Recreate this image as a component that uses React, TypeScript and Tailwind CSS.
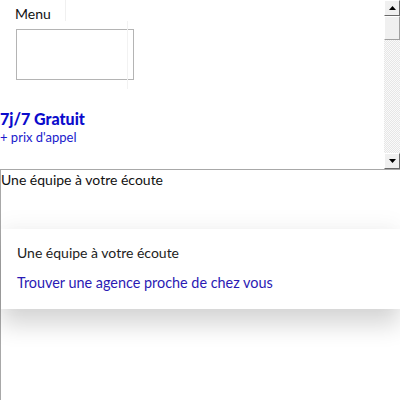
import React from 'react';

function ScrollButton({ dir }: { dir: 'up' | 'down' }) {
  return (
    <div className="h-4 w-4 bg-[#f0f0f0] border border-t-white border-l-white border-r-[#696969] border-b-[#696969] flex items-center justify-center">
      <svg width="7" height="4" viewBox="0 0 7 4">
        {dir === 'up' ? (
          <polygon points="3.5,0 7,4 0,4" fill="#000" />
        ) : (
          <polygon points="0,0 7,0 3.5,4" fill="#000" />
        )}
      </svg>
    </div>
  );
}

function Scrollbar() {
  return (
    <div className="w-4 h-full flex flex-col bg-[repeating-conic-gradient(#e6e6e6_0_25%,#fafafa_0_50%)] bg-[length:2px_2px]">
      <ScrollButton dir="up" />
      <div className="h-[24px] bg-[#f0f0f0] border border-t-white border-l-white border-r-[#a0a0a0] border-b-[#a0a0a0]" />
      <div className="flex-1" />
      <ScrollButton dir="down" />
    </div>
  );
}

export default function App() {
  return (
    <div className="w-[400px] h-[400px] bg-white overflow-hidden font-['Lato','Liberation_Sans',sans-serif]">
      {/* top frame */}
      <div className="h-[169px] flex">
        <div className="flex-1 relative">
          <div className="flex">
            <div className="pl-[15px] pr-[14px] pt-[3px] h-[21px] text-[14px] text-[#111] border-r border-[#f0f0f0]">
              Menu
            </div>
          </div>
          <div className="flex">
            <div className="ml-4 mt-2 w-[118px] h-[51px] border border-[#b4b4b4]" />
            <div className="ml-[-7px] w-px h-[68px] bg-[#f2f2f2]" />
          </div>
          <div className="mt-[20px] text-[16px] font-black leading-5 text-[#0b0bcc]">7j/7 Gratuit</div>
          <div className="text-[13px] leading-4 text-[#1a1acc]">+ prix d'appel</div>
        </div>
        <Scrollbar />
      </div>

      {/* bottom frame */}
      <div className="h-[231px] border-t border-l border-[#a8a8a8]">
        <div className="text-[14px] leading-[20px] text-[#111]">Une équipe à votre écoute</div>
        <div className="mt-[39px] bg-white shadow-[0_16px_22px_rgba(0,0,0,0.16),0_-6px_20px_rgba(0,0,0,0.04)] px-4 pt-[14px] pb-[16px]">
          <div className="text-[14px] leading-[20px] text-[#222]">Une équipe à votre écoute</div>
          <div className="mt-[10px] text-[14.4px] leading-[20px] text-[#2a1ab4]">Trouver une agence proche de chez vous</div>
        </div>
      </div>
    </div>
  );
}
